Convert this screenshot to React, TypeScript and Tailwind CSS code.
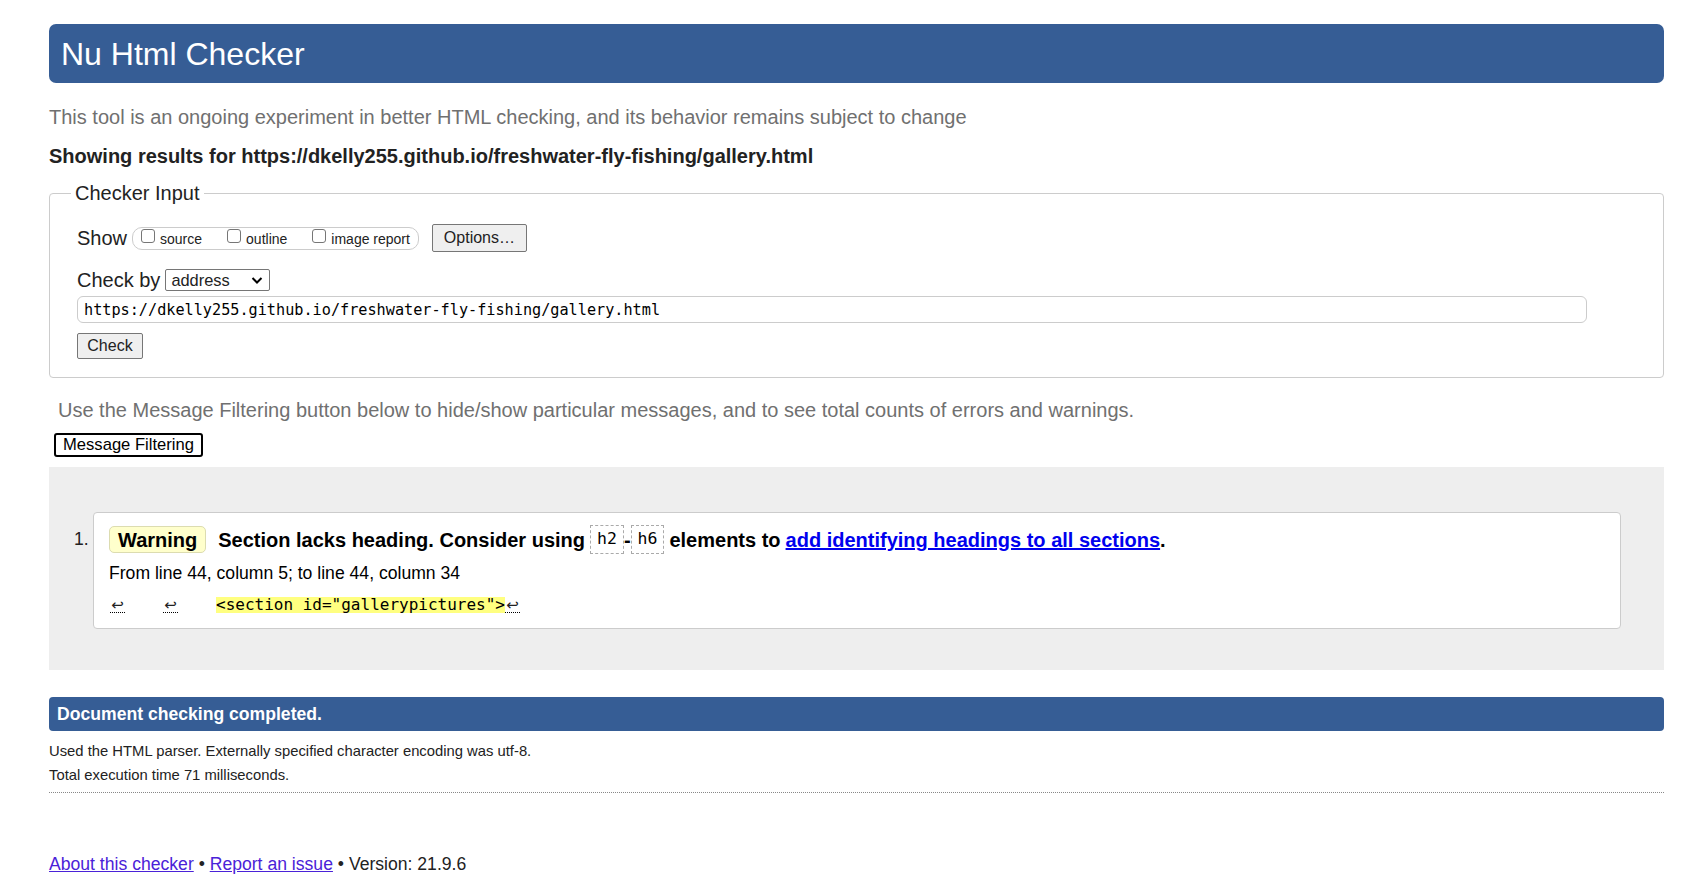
import React from "react";

const URL = "https://dkelly255.github.io/freshwater-fly-fishing/gallery.html";

/** Small native-looking checkbox with its label */
function ShowOption({ label, first }: { label: string; first?: boolean }) {
  return (
    <label className={`flex items-center ${first ? "" : "ml-[25px]"}`}>
      <input
        type="checkbox"
        className="appearance-none w-[14px] h-[14px] -mt-[5px] border border-[#767676] rounded-[3px] bg-white"
      />
      <span className="ml-[5px] text-[14px] leading-none pt-[2px]">{label}</span>
    </label>
  );
}

/** Dashed inline code token (h2 / h6) */
function CodeToken({ children }: { children: React.ReactNode }) {
  return (
    <code className="h-[29px] px-[6px] flex items-center border border-dashed border-[#aaa] font-['DejaVu_Sans_Mono',monospace] text-[16.5px] font-normal">
      {children}
    </code>
  );
}

/** Line-break marker shown in the source extract */
function LineMark({ className = "" }: { className?: string }) {
  return (
    <span
      className={`inline-flex justify-center w-[15px] h-[16px] leading-[16px] text-[15px] border-b border-dotted border-black font-['DejaVu_Sans',sans-serif] ${className}`}
    >
      ↩
    </span>
  );
}

export default function App() {
  return (
    <div className="min-h-screen bg-white font-['Liberation_Sans',Arial,sans-serif] text-[#222] pl-[49px] pr-[35px] pt-[24px] pb-[20px]">
      {/* Title bar */}
      <h1 className="h-[59px] flex items-center pl-[12px] rounded-[7px] bg-[#365d95] text-white text-[32px] leading-none font-normal">
        Nu Html Checker
      </h1>

      <p className="mt-[22px] text-[20px] leading-[24px] text-[#707070]">
        This tool is an ongoing experiment in better HTML checking, and its behavior remains subject to change
      </p>
      <p className="mt-[15px] text-[20px] leading-[24px] font-bold">Showing results for {URL}</p>

      {/* Checker input form */}
      <fieldset className="mt-[13px] border border-[#ccc] rounded-[4px] pl-[27px] pb-[18px]">
        <legend className="-ml-[6px] px-[4px] text-[20px] leading-[24px]">Checker Input</legend>

        <div className="mt-[19px] flex items-center h-[28px]">
          <span className="text-[20px] leading-none">Show</span>
          <div className="ml-[5px] h-[23px] flex items-center border border-[#ccc] rounded-[10px] pl-[8px] pr-[8px]">
            <ShowOption label="source" first />
            <ShowOption label="outline" />
            <ShowOption label="image report" />
          </div>
          <button
            type="button"
            className="ml-[13px] h-[28px] w-[95px] flex items-center justify-center bg-[#efefef] border border-[#767676] rounded-[2px] text-[16px] leading-none"
          >
            Options…
          </button>
        </div>

        <div className="mt-[17px] flex items-center h-[22px]">
          <span className="text-[20px] leading-none">Check by</span>
          <div className="ml-[5px] relative h-[22px] w-[105px] border border-[#767676] rounded-[2px] bg-white flex items-center pl-[5px] text-[16.4px] leading-none">
            address
            <svg
              className="absolute right-[6px] top-[6px]"
              width="12"
              height="9"
              viewBox="0 0 12 9"
              fill="none"
              stroke="#000"
              strokeWidth="2"
            >
              <path d="M1.5 2 L6 6.5 L10.5 2" />
            </svg>
          </div>
        </div>

        <div className="mt-[5px]">
          <input
            readOnly
            value={URL}
            className="h-[27px] w-[1510px] border border-[#ccc] rounded-[6px] px-[6px] font-['DejaVu_Sans_Mono',monospace] text-[15.2px] text-black outline-none"
          />
        </div>

        <div className="mt-[10px]">
          <button
            type="button"
            className="h-[26px] w-[66px] bg-[#efefef] border border-[#767676] rounded-[2px] text-[16px] leading-none"
          >
            Check
          </button>
        </div>
      </fieldset>

      <p className="mt-[20px] pl-[9px] text-[20px] leading-[24px] text-[#707070]">
        Use the Message Filtering button below to hide/show particular messages, and to see total counts of errors and warnings.
      </p>
      <div className="mt-[11px] pl-[5px]">
        <button
          type="button"
          className="h-[24px] w-[149px] border-2 border-black rounded-[3px] bg-white text-[16.6px] leading-none text-black"
        >
          Message Filtering
        </button>
      </div>

      {/* Results */}
      <div className="mt-[10px] bg-[#eeeeee] pt-[45px] pb-[41px] flex">
        <div className="w-[44px] pl-[25px] pt-[15px] text-[17.6px] leading-[24px]">1.</div>
        <div className="w-[1528px] h-[117px] border border-[#ccc] rounded-[4px] bg-white pl-[15px]">
          <div className="mt-[12px] h-[29px] flex items-center whitespace-nowrap text-[20px] font-bold text-black">
            <span className="h-[27px] px-[8px] flex items-center bg-[#ffffcc] border border-[#dcdcb0] rounded-[5px]">
              Warning
            </span>
            <span className="ml-[12px]">Section lacks heading. Consider using</span>
            <span className="ml-[5px]">
              <CodeToken>h2</CodeToken>
            </span>
            <span>-</span>
            <CodeToken>h6</CodeToken>
            <span className="ml-[5px]">elements to</span>
            <a href="#" className="ml-[5px] text-[#0000ee] underline">
              add identifying headings to all sections
            </a>
            <span>.</span>
          </div>
          <p className="mt-[7px] text-[17.6px] leading-[24px] text-black">
            From line 44, column 5; to line 44, column 34
          </p>
          <div className="mt-[12px] flex items-start">
            <LineMark className="ml-[1px]" />
            <LineMark className="ml-[38px]" />
            <code className="ml-[38px] h-[16px] leading-[16px] bg-[#ffff80] font-['DejaVu_Sans_Mono',monospace] text-[16px] text-black whitespace-pre">
              {'<section id="gallerypictures">'}
            </code>
            <LineMark />
          </div>
        </div>
      </div>

      {/* Summary */}
      <div className="mt-[27px] h-[34px] flex items-center pl-[8px] bg-[#365d95] rounded-[4px] text-white font-bold text-[17.6px] leading-none">
        Document checking completed.
      </div>
      <p className="mt-[8px] text-[14.8px] leading-[24px]">
        Used the HTML parser. Externally specified character encoding was utf-8.
      </p>
      <p className="text-[14.8px] leading-[24px]">Total execution time 71 milliseconds.</p>
      <div className="mt-[5px] border-t border-dotted border-[#888]" />

      <p className="mt-[59px] text-[17.6px] leading-[24px]">
        <a href="#" className="text-[#4a22d8] underline">
          About this checker
        </a>{" "}
        •{" "}
        <a href="#" className="text-[#4a22d8] underline">
          Report an issue
        </a>{" "}
        • Version: 21.9.6
      </p>
    </div>
  );
}
